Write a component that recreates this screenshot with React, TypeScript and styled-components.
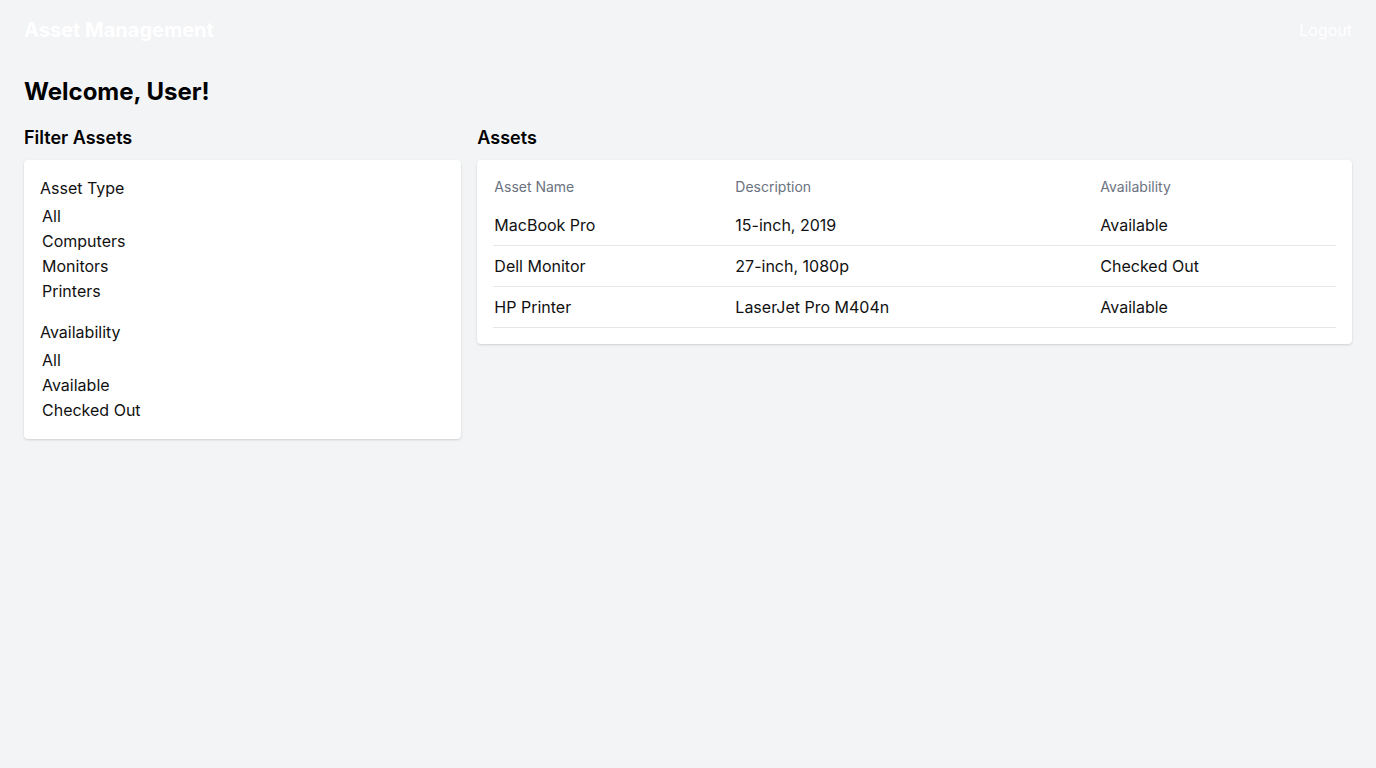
import React from "react";
import styled, { createGlobalStyle } from "styled-components";

const GlobalStyle = createGlobalStyle`
  * { box-sizing: border-box; }
  html, body { margin: 0; padding: 0; }
  body {
    background: #f3f4f6;
    font-family: Inter, "Noto Sans", "Liberation Sans", sans-serif;
    color: #111111;
  }
`;

const Page = styled.div`
  min-height: 768px;
  background: #f3f4f6;
`;

const Nav = styled.nav`
  display: flex;
  justify-content: space-between;
  align-items: center;
  padding: 16px 24px;
`;

const Brand = styled.div`
  font-size: 20px;
  line-height: 28px;
  font-weight: 700;
  color: #ffffff;
`;

const LogoutButton = styled.button`
  background: none;
  border: none;
  padding: 0;
  font-family: inherit;
  font-size: 16px;
  line-height: 24px;
  color: #ffffff;
  cursor: pointer;
`;

const Main = styled.main`
  padding: 16px 24px 24px;
`;

const Title = styled.h1`
  margin: 0 0 16px;
  font-size: 24px;
  line-height: 32px;
  font-weight: 700;
  color: #000000;
`;

const Grid = styled.div`
  display: grid;
  grid-template-columns: 1fr 2fr;
  gap: 16px;
  align-items: start;
`;

const Column = styled.section``;

const SectionTitle = styled.h2`
  margin: 0 0 8px;
  font-size: 18px;
  line-height: 28px;
  font-weight: 600;
  color: #000000;
`;

const Card = styled.div`
  background: #ffffff;
  border-radius: 4px;
  padding: 16px;
  box-shadow: 0 1px 3px rgba(0, 0, 0, 0.1), 0 1px 2px rgba(0, 0, 0, 0.06);
`;

const Group = styled.div`
  & + & {
    margin-top: 16px;
  }
`;

const GroupLabel = styled.div`
  font-size: 16px;
  line-height: 24px;
  margin-bottom: 4px;
  color: #111111;
`;

const OptionList = styled.ul`
  list-style: none;
  margin: 0;
  padding: 0;
`;

const Option = styled.li`
  padding-left: 2px;
  font-size: 16px;
  line-height: 25px;
  color: #111111;
  cursor: pointer;
`;

const Table = styled.table`
  width: 100%;
  border-collapse: collapse;
  table-layout: fixed;
`;

const HeadCell = styled.th`
  text-align: left;
  font-weight: 400;
  font-size: 14px;
  line-height: 20px;
  color: #6b7280;
  padding: 1px 1px 8px;
`;

const Row = styled.tr`
  border-bottom: 1px solid #e5e7eb;
`;

const Cell = styled.td`
  font-size: 16px;
  line-height: 24px;
  color: #111111;
  padding: 8px 1px;
`;

const assetTypes = ["All", "Computers", "Monitors", "Printers"];
const availability = ["All", "Available", "Checked Out"];

const assets = [
  { name: "MacBook Pro", description: "15-inch, 2019", availability: "Available" },
  { name: "Dell Monitor", description: "27-inch, 1080p", availability: "Checked Out" },
  { name: "HP Printer", description: "LaserJet Pro M404n", availability: "Available" },
];

export default function App() {
  return (
    <Page>
      <GlobalStyle />
      <Nav>
        <Brand>Asset Management</Brand>
        <LogoutButton>Logout</LogoutButton>
      </Nav>
      <Main>
        <Title>Welcome, User!</Title>
        <Grid>
          <Column>
            <SectionTitle>Filter Assets</SectionTitle>
            <Card>
              <Group>
                <GroupLabel>Asset Type</GroupLabel>
                <OptionList>
                  {assetTypes.map((t) => (
                    <Option key={t}>{t}</Option>
                  ))}
                </OptionList>
              </Group>
              <Group>
                <GroupLabel>Availability</GroupLabel>
                <OptionList>
                  {availability.map((t) => (
                    <Option key={t}>{t}</Option>
                  ))}
                </OptionList>
              </Group>
            </Card>
          </Column>
          <Column>
            <SectionTitle>Assets</SectionTitle>
            <Card>
              <Table>
                <colgroup>
                  <col style={{ width: 241 }} />
                  <col style={{ width: 365 }} />
                  <col />
                </colgroup>
                <thead>
                  <tr>
                    <HeadCell>Asset Name</HeadCell>
                    <HeadCell>Description</HeadCell>
                    <HeadCell>Availability</HeadCell>
                  </tr>
                </thead>
                <tbody>
                  {assets.map((a) => (
                    <Row key={a.name}>
                      <Cell>{a.name}</Cell>
                      <Cell>{a.description}</Cell>
                      <Cell>{a.availability}</Cell>
                    </Row>
                  ))}
                </tbody>
              </Table>
            </Card>
          </Column>
        </Grid>
      </Main>
    </Page>
  );
}
